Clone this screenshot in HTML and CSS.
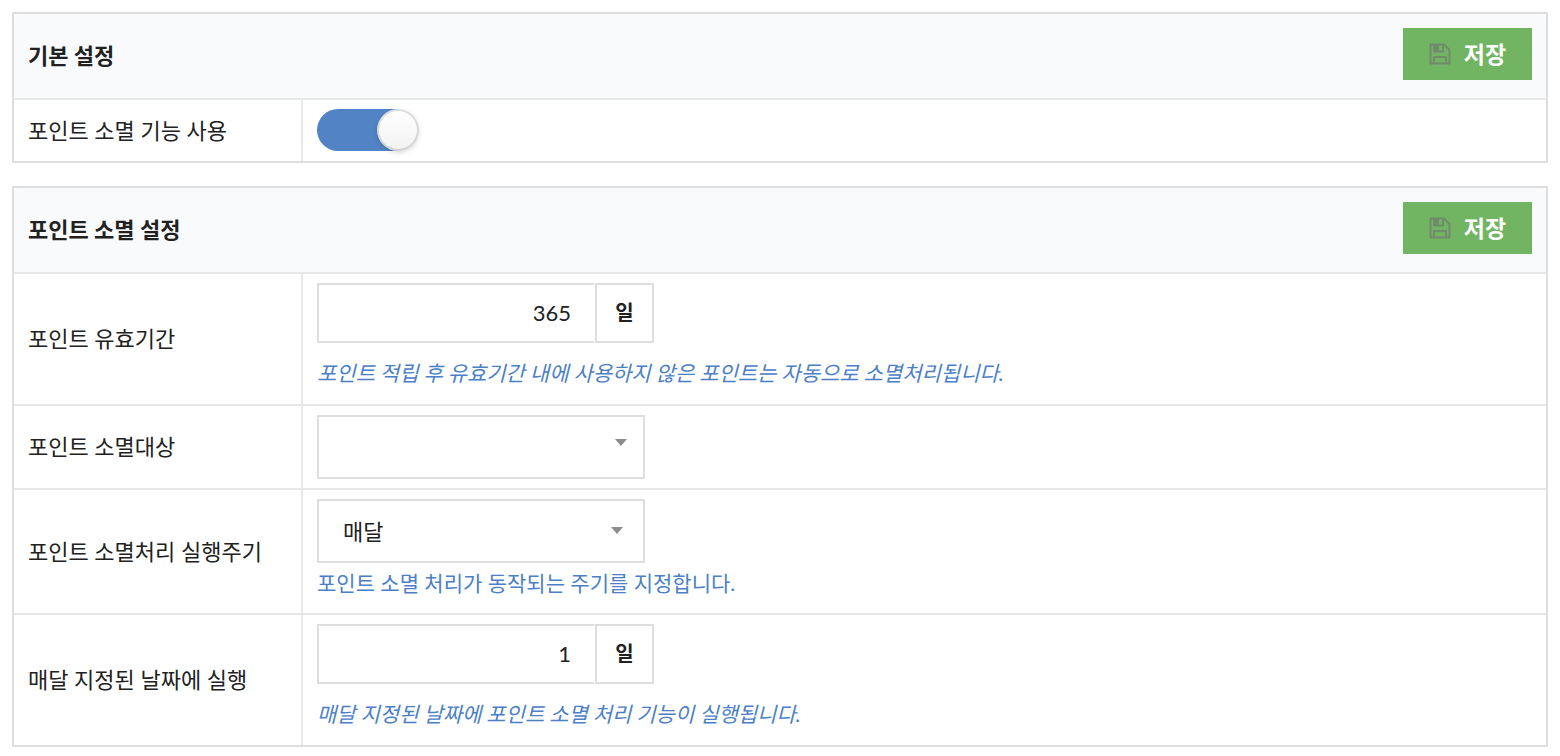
FILE: index.html
```html
<!DOCTYPE html>
<html lang="ko">
<head>
<meta charset="utf-8">
<meta name="viewport" content="width=device-width, initial-scale=1">
<title>포인트 소멸 설정</title>
<link rel="stylesheet" href="styles.css">
</head>
<body>
<form class="settings">
  <table class="panel">
    <colgroup><col class="col-name"><col></colgroup>
    <thead>
      <tr>
        <th class="panel-head" colspan="2">
          <div class="panel-bar">
            <span>기본 설정</span>
            <button class="save" type="button">
              <svg class="save-icon" viewBox="0 0 22 22" aria-hidden="true">
                <path d="M1.5 1.5H15L20.5 7V20.5H1.5ZM5 20V14H17V20M5 2V8.5H14V2"/>
                <rect class="save-fill" x="5" y="2" width="5" height="6"/>
              </svg>
              <span class="save-text">저장</span>
            </button>
          </div>
        </th>
      </tr>
    </thead>
    <tbody>
      <tr>
        <th class="name" scope="row"><label for="use">포인트 소멸 기능 사용</label></th>
        <td class="value"><input class="toggle" id="use" type="checkbox" checked></td>
      </tr>
    </tbody>
  </table>

  <table class="panel">
    <colgroup><col class="col-name"><col></colgroup>
    <thead>
      <tr>
        <th class="panel-head" colspan="2">
          <div class="panel-bar">
            <span>포인트 소멸 설정</span>
            <button class="save" type="button">
              <svg class="save-icon" viewBox="0 0 22 22" aria-hidden="true">
                <path d="M1.5 1.5H15L20.5 7V20.5H1.5ZM5 20V14H17V20M5 2V8.5H14V2"/>
                <rect class="save-fill" x="5" y="2" width="5" height="6"/>
              </svg>
              <span class="save-text">저장</span>
            </button>
          </div>
        </th>
      </tr>
    </thead>
    <tbody>
      <tr>
        <th class="name" scope="row"><label for="period">포인트 유효기간</label></th>
        <td class="value">
          <div class="amount">
            <input class="amount-input" id="period" type="text" value="365">
            <span class="unit">일</span>
          </div>
          <p class="hint hint-note">포인트 적립 후 유효기간 내에 사용하지 않은 포인트는 자동으로 소멸처리됩니다.</p>
        </td>
      </tr>
      <tr>
        <th class="name" scope="row"><label for="target">포인트 소멸대상</label></th>
        <td class="value">
          <div class="dropdown">
            <select class="select" id="target"><option></option></select>
            <svg class="caret caret-search" viewBox="0 0 12 7" aria-hidden="true"><path d="M0 0H12L6 7Z"/></svg>
          </div>
        </td>
      </tr>
      <tr>
        <th class="name" scope="row"><label for="cycle">포인트 소멸처리 실행주기</label></th>
        <td class="value">
          <div class="dropdown">
            <select class="select" id="cycle"><option>매달</option></select>
            <svg class="caret" viewBox="0 0 12 7" aria-hidden="true"><path d="M0 0H12L6 7Z"/></svg>
          </div>
          <p class="hint">포인트 소멸 처리가 동작되는 주기를 지정합니다.</p>
        </td>
      </tr>
      <tr>
        <th class="name" scope="row"><label for="day">매달 지정된 날짜에 실행</label></th>
        <td class="value">
          <div class="amount">
            <input class="amount-input" id="day" type="text" value="1">
            <span class="unit">일</span>
          </div>
          <p class="hint hint-note">매달 지정된 날짜에 포인트 소멸 처리 기능이 실행됩니다.</p>
        </td>
      </tr>
    </tbody>
  </table>
</form>
</body>
</html>
```
FILE: styles.css
```css
* {
  box-sizing: border-box;
}

body {
  margin: 0;
  background: #fff;
  color: #212121;
  font-family: Lato, "Noto Sans CJK KR", sans-serif;
  font-size: 22px;
  line-height: 30px;
}

input,
select,
button {
  margin: 0;
  font-family: inherit;
  font-size: inherit;
  color: inherit;
}

.settings {
  display: flex;
  flex-direction: column;
  gap: 23px;
  padding: 12px 12px 9px;
}

.panel {
  width: 100%;
  table-layout: fixed;
  border: 2px solid #dededf;
  border-collapse: separate;
  border-spacing: 0;
  text-align: left;
}

.col-name {
  width: 287px;
}

.panel-head {
  padding: 14px;
  border-radius: 6px 6px 0 0;
  background: #f9fafb;
  font-weight: 700;
}

.panel-bar {
  display: flex;
  align-items: center;
  justify-content: space-between;
}

.save {
  display: flex;
  align-items: center;
  justify-content: center;
  gap: 13px;
  width: 129px;
  height: 52px;
  margin-bottom: 4px;
  padding: 0;
  border: 0;
  background: #71b562;
  color: #fff;
  font-size: 23px;
  font-weight: 700;
}

.save-text {
  padding-bottom: 3px;
}

.save-icon {
  width: 22px;
  height: 22px;
  fill: none;
  stroke: #728a6c;
  stroke-width: 2;
  stroke-linejoin: round;
}

.save-fill {
  fill: #728a6c;
  stroke: none;
}

.name,
.value {
  padding: 9px 14px;
  border-top: 2px solid #e6e7e7;
}

.name {
  font-weight: 400;
}

.value {
  border-left: 2px solid #e8e8e9;
}

.toggle {
  position: relative;
  display: block;
  width: 98px;
  height: 42px;
  margin-bottom: 1px;
  border-radius: 21px;
  appearance: none;
  background: #d4d4d5;
}

.toggle::before {
  content: "";
  position: absolute;
  top: 0;
  left: 0;
  width: 42px;
  height: 42px;
  border-radius: 50%;
  background: linear-gradient(#fff, #f2f2f2);
  box-shadow: 0 2px 4px rgba(34, 36, 38, 0.15), inset 0 0 0 2px rgba(34, 36, 38, 0.15);
}

.toggle:checked {
  background: #5183c5;
}

.toggle:checked::before {
  left: 60px;
}

.amount {
  display: flex;
  height: 60px;
}

.amount-input {
  width: 278px;
  padding: 0 22px 2px;
  border: 2px solid #dededf;
  border-right-color: transparent;
  background: #fff;
  text-align: right;
}

.unit {
  display: flex;
  align-items: center;
  justify-content: center;
  width: 59px;
  padding-bottom: 2px;
  border: 2px solid #dededf;
  font-size: 20px;
  font-weight: 700;
}

.dropdown {
  position: relative;
  width: 328px;
}

.select {
  display: block;
  width: 100%;
  height: 64px;
  padding: 0 24px;
  border: 2px solid #dededf;
  border-radius: 0;
  appearance: none;
  background: #fff;
}

.caret {
  position: absolute;
  top: 28px;
  right: 22px;
  width: 12px;
  height: 7px;
  fill: #8c8c8c;
  pointer-events: none;
}

.caret-search {
  top: 24px;
  right: 18px;
}

.hint {
  margin: 5px 0 6px;
  color: #4b80c6;
  font-size: 21px;
}

.hint-note {
  margin: 15px 0 7px;
  font-style: italic;
}
```
